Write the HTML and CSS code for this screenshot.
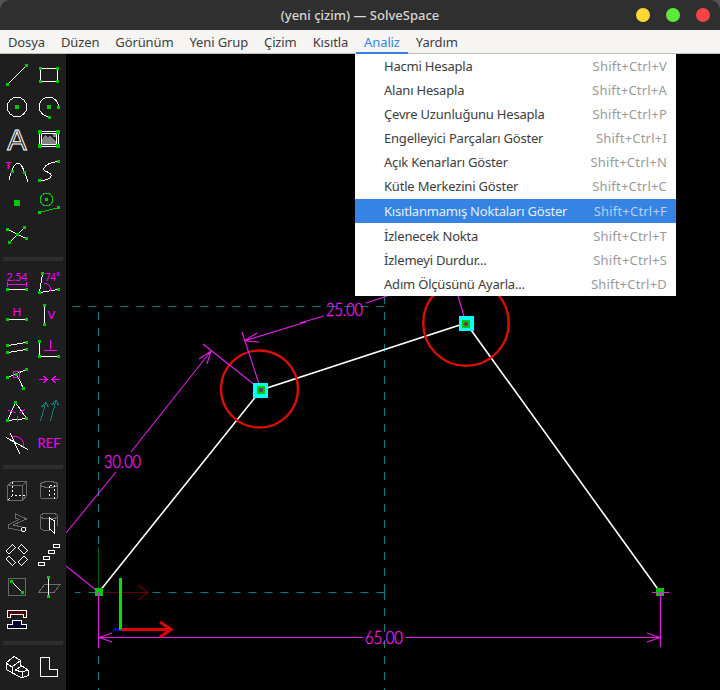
FILE: index.html

```html
<!DOCTYPE html>
<html lang="en">
<head>
    <meta charset="UTF-8">
    <meta name="viewport" content="width=device-width, initial-scale=1.0">
    <title>(yeni çizim) — SolveSpace</title>
    <link rel="stylesheet" href="styles.css">
</head>
<body>
<div class="window">
    <header class="titlebar">
        <span class="title">(yeni çizim) — SolveSpace</span>
        <div class="win-btns">
            <span class="dot yellow"></span>
            <span class="dot green"></span>
            <span class="dot red"></span>
        </div>
    </header>

    <nav class="menubar">
        <span class="menu-item">Dosya</span>
        <span class="menu-item">Düzen</span>
        <span class="menu-item">Görünüm</span>
        <span class="menu-item">Yeni Grup</span>
        <span class="menu-item">Çizim</span>
        <span class="menu-item">Kısıtla</span>
        <span class="menu-item active">Analiz</span>
        <span class="menu-item">Yardım</span>
    </nav>

    <div class="main">
        <aside class="toolbar">
            <div class="tool-group">
                <svg viewBox="0 0 32 32"><path class="w" d="M6.5 25.5 25.5 6.5"/><rect class="g" x="5" y="24" width="3" height="3"/><rect class="g" x="24" y="5" width="3" height="3"/></svg>
                <svg viewBox="0 0 32 32"><rect class="w" x="7.5" y="9.5" width="17" height="13"/><rect class="g" x="6" y="8" width="3" height="3"/><rect class="g" x="23" y="8" width="3" height="3"/><rect class="g" x="6" y="21" width="3" height="3"/><rect class="g" x="23" y="21" width="3" height="3"/></svg>

                <svg viewBox="0 0 32 32"><circle class="w" cx="16" cy="16" r="9.7"/><rect class="g" x="14" y="14" width="4" height="4"/></svg>
                <svg viewBox="0 0 32 32"><path class="w" d="M25.5 16A9.7 9.7 0 1 0 16 25.5"/><rect class="g" x="14" y="14" width="4" height="4"/><rect class="g" x="24" y="14.5" width="3" height="3"/><rect class="g" x="15" y="24.5" width="3" height="3"/></svg>

                <svg viewBox="0 0 32 32"><text class="icon-a" x="16" y="27" text-anchor="middle">A</text></svg>
                <svg viewBox="0 0 32 32"><rect class="w" x="6.5" y="8.5" width="19" height="15"/><rect class="w" x="8.5" y="10.5" width="15" height="11"/><path class="pic" d="M9 21V17L12 12 15 15 17 12 19 15 21 17 23 18V21Z"/><rect class="pic" x="20" y="11" width="3" height="3"/><rect class="g" x="5" y="7" width="4" height="4"/><rect class="g" x="23" y="7" width="4" height="4"/><rect class="g" x="5" y="21" width="4" height="4"/><rect class="g" x="23" y="21" width="4" height="4"/></svg>

                <svg viewBox="0 0 32 32"><text class="mt mt-t" x="4.500" y="13.500">T</text><path class="w" d="M8 25C10 17 13 8 17 8S24 18 27 27"/><rect class="g" x="10" y="14.500" width="3" height="3"/><rect class="g" x="22" y="15.500" width="3" height="3"/></svg>
                <svg viewBox="0 0 32 32"><path class="w" d="M6.500 25.500C12 25.500 19 24 18 20C17 16 9 17 11 13C13 9 20 7 25.500 6.500"/><rect class="g" x="5" y="24" width="3" height="3"/><rect class="g" x="24" y="5" width="3" height="3"/></svg>

                <svg viewBox="0 0 32 32"><rect class="g" x="13" y="13" width="6" height="6"/></svg>
                <svg viewBox="0 0 32 32"><circle class="gl" cx="13.500" cy="12.500" r="6.300"/><rect class="g" x="12" y="11" width="3" height="3"/><path class="gl" d="M6.500 25.500 25.500 20.500"/><rect class="g" x="5" y="24" width="3" height="3"/><rect class="g" x="24" y="19" width="3" height="3"/></svg>

                <svg viewBox="0 0 32 32"><path class="w" d="M6.500 10.500 25.500 19.500M23.500 8.500 8.500 23.500"/><rect class="g" x="5" y="9" width="3" height="3"/><rect class="g" x="24" y="18" width="3" height="3"/><rect class="g" x="22" y="7" width="3" height="3"/><rect class="g" x="7" y="22" width="3" height="3"/><rect class="g" x="14.500" y="13.500" width="3" height="3"/></svg>
            </div>

            <div class="tool-sep"></div>

            <div class="tool-group">
                <svg viewBox="0 0 32 32"><text class="mt mt-s" x="16" y="14" text-anchor="middle" textLength="21" lengthAdjust="spacingAndGlyphs">2.54</text><path class="m" d="M6.500 17.500H25.500M6.500 15V20M25.500 15V20"/><path class="w" d="M6.500 22.500H25.500"/><rect class="g" x="5" y="21" width="3" height="3"/><rect class="g" x="24" y="21" width="3" height="3"/></svg>
                <svg viewBox="0 0 32 32"><path class="w" d="M9.500 6.500 6.500 25.500 25.500 22.500"/><path class="m" d="M10.500 16C15 16 17.500 19 18 23.500"/><text class="mt mt-s" x="12" y="14" textLength="15" lengthAdjust="spacingAndGlyphs">74°</text><rect class="g" x="8" y="5" width="3" height="3"/><rect class="g" x="5" y="24" width="3" height="3"/><rect class="g" x="24" y="21" width="3" height="3"/></svg>

                <svg viewBox="0 0 32 32"><text class="mt mt-s" x="16" y="17" text-anchor="middle">H</text><path class="w" d="M6.500 20.500H25.500"/><rect class="g" x="5" y="19" width="3" height="3"/><rect class="g" x="24" y="19" width="3" height="3"/></svg>
                <svg viewBox="0 0 32 32"><path class="w" d="M11.500 6.500V25.500"/><text class="mt mt-s" x="18.500" y="20" text-anchor="middle">V</text><rect class="g" x="10" y="5" width="3" height="3"/><rect class="g" x="10" y="24" width="3" height="3"/></svg>

                <svg viewBox="0 0 32 32"><path class="w" d="M6.500 14.500 25.500 11.500M6.500 21.500 25.500 18.500"/><rect class="g" x="5" y="13" width="3" height="3"/><rect class="g" x="24" y="10" width="3" height="3"/><rect class="g" x="5" y="20" width="3" height="3"/><rect class="g" x="24" y="17" width="3" height="3"/></svg>
                <svg viewBox="0 0 32 32"><path class="w" d="M6.500 10.500V25.500H25.500"/><path class="m" d="M17.500 9V19.500M11 19.500H24"/><rect class="g" x="5" y="9" width="3" height="3"/><rect class="g" x="5" y="24" width="3" height="3"/><rect class="g" x="24" y="24" width="3" height="3"/></svg>

                <svg viewBox="0 0 32 32"><path class="w" d="M6.500 14.500 25.500 6.500M15.500 11 22.500 25.500"/><rect class="m" x="12.500" y="8.500" width="6" height="6"/><rect class="g" x="5" y="13" width="3" height="3"/><rect class="g" x="24" y="5" width="3" height="3"/><rect class="g" x="21" y="24" width="3" height="3"/><rect class="g" x="14" y="9.500" width="3" height="3"/></svg>
                <svg viewBox="0 0 32 32"><path class="m" d="M6 16.500H14M10.500 13 14 16.500 10.500 20M27 16.500H19M22.500 13 19 16.500 22.500 20"/></svg>

                <svg viewBox="0 0 32 32"><path class="w" d="M14.500 7.500 6.500 25.500 25.500 23.500Z"/><path class="m" d="M7.500 15.500 15 17.500M18.500 18 24 14.500M16 21V27"/><rect class="g" x="13" y="6" width="3" height="3"/><rect class="g" x="5" y="24" width="3" height="3"/><rect class="g" x="24" y="22" width="3" height="3"/></svg>
                <svg viewBox="0 0 32 32"><path class="t" d="M7.500 26 13 7M8.500 12 13 7 15.500 12.500M17.500 26 23 5M18.500 10 23 5 25.500 10.500"/></svg>

                <svg viewBox="0 0 32 32"><path class="w" d="M5 10.500 27 22.500M9 6 19 27"/><path class="m" d="M11 9C19 9 23 13 23 20"/></svg>
                <svg viewBox="0 0 32 32"><text class="mt mt-ref" x="16" y="21" text-anchor="middle" textLength="23" lengthAdjust="spacingAndGlyphs">REF</text></svg>
            </div>

            <div class="tool-sep"></div>

            <div class="tool-group">
                <svg viewBox="0 0 32 32"><path class="d" d="M6.500 10.500H21.500V25.500H6.500ZM6.500 10.500 11.500 6.500H25.500V20.500L21.500 25.500M21.500 10.500 25.500 6.500"/><path class="wd" d="M11.500 6.500V20.500H25.500M11.500 20.500 6.500 25.500"/></svg>
                <svg viewBox="0 0 32 32"><path class="d" d="M7.500 9.500V22.500C7.500 24.500 24.500 24.500 24.500 22.500V9.500"/><ellipse class="d" cx="16" cy="9.500" rx="8.500" ry="3"/><path class="wd" d="M16.500 10.500H21.500V24M16.500 10.500V23"/></svg>

                <svg viewBox="0 0 32 32"><path class="d" d="M14 6.500 25.500 12 12 18 25.500 21M14 6.500 14 11 18 12.500 7 18 7 21 22 24"/><circle class="w" cx="22.500" cy="22.500" r="2"/></svg>
                <svg viewBox="0 0 32 32"><path class="d" d="M7.500 9V21C7.500 23 13 24 17 24M24.500 9V19"/><ellipse class="d" cx="16" cy="9" rx="8.500" ry="3"/><path class="d" d="M16.500 11V22"/><path class="w" d="M16.500 11 21.500 14V26L16.500 22Z"/></svg>

                <svg viewBox="0 0 32 32"><rect class="w" x="5.500" y="8" width="9" height="4.500" transform="rotate(-45 10 10.300)"/><rect class="w" x="17.200" y="8" width="9" height="4.500" transform="rotate(45 21.700 10.300)"/><rect class="w" x="5.500" y="19.500" width="9" height="4.500" transform="rotate(45 10 21.700)"/><rect class="w" x="17.200" y="19.500" width="9" height="4.500" transform="rotate(-45 21.700 21.700)"/></svg>
                <svg viewBox="0 0 32 32"><rect class="w" x="5.500" y="23.500" width="6" height="3"/><rect class="w" x="10.500" y="17.500" width="6" height="3"/><rect class="w" x="15.500" y="11.500" width="6" height="3"/><rect class="w" x="20.500" y="5.500" width="6" height="3"/></svg>

                <svg viewBox="0 0 32 32"><rect class="d" x="7.500" y="7.500" width="17" height="17"/><path class="w" d="M10.500 10.500 21.500 21.500"/><rect class="g" x="9" y="9" width="3" height="3"/><rect class="g" x="20" y="20" width="3" height="3"/></svg>
                <svg viewBox="0 0 32 32"><path class="d" d="M5.500 21.500 11.500 13.500H27L21 21.500Z"/><path class="w" d="M15.500 6.500V25.500"/><rect class="g" x="14" y="5" width="3" height="3"/><rect class="g" x="14" y="24" width="3" height="3"/></svg>

                <svg viewBox="0 0 32 32"><path class="w top-half" d="M6.500 7.500H25.500V14.500H22.500V11.500H9.500V14.500H6.500Z"/><path class="w bottom-half" d="M6.500 25.500H25.500V21.500H20.500V17.500H11.500V21.500H6.500Z"/></svg>
                <svg viewBox="0 0 32 32"></svg>
            </div>

            <div class="tool-sep"></div>

            <div class="tool-group">
                <svg viewBox="0 0 32 32"><path class="w" d="M5 12 13 5.500 19.500 9.500V14L27 19V24.500L21 27 5 18.500ZM5 12 11 16V22M11 16 19.500 9.500M14 19 21 15M21 27V21L14 19M21 21 27 19"/></svg>
                <svg viewBox="0 0 32 32"><path class="w" d="M7.500 6.500H16.500V18.500H24.500V25.500H7.500Z"/></svg>
            </div>
        </aside>

        <div class="canvas">
            <svg class="sketch" viewBox="66 54 654 636">
                <path class="s-ref" d="M384.500 306.500H66M384.500 592.500H75M98.500 592V309M98.500 592V690M384.500 592V296M384.500 592V690"/>
                <path class="s-axis-dim-g" d="M98.500 547V592"/>
                <path class="s-axis-dim-r" d="M103 592.500H148M138 585 148 592.500 138 600"/>

                <path class="s-line" d="M99 592 261 390 466 323 660 592"/>

                <circle class="s-circle" cx="259.500" cy="389" r="38.500"/>
                <circle class="s-circle" cx="466" cy="323" r="42.800"/>

                <path class="s-dim" d="M261 390 203 344M131 452 211 351M199 359 211 351 207 364M116 472 66 533"/>
                <path class="s-dim" d="M98.500 592 66 566"/>
                <path class="s-dim" d="M261 390 242 332M244 341 257 333M244 341 259 342M244 341 306 322M300 323 324 316M366 303 387 296M466 323 458 296"/>
                <path class="s-dim" d="M98.500 592V648M660.500 592V647M99 637.500H363M406 637.500H660M99 637.500 112 633M99 637.500 112 642M660 637.500 647 633M660 637.500 647 642"/>

                <text class="s-label" x="104" y="468" textLength="37" lengthAdjust="spacingAndGlyphs">30.00</text>
                <text class="s-label" x="326" y="316" textLength="37" lengthAdjust="spacingAndGlyphs">25.00</text>
                <text class="s-label" x="365" y="644" textLength="38" lengthAdjust="spacingAndGlyphs">65.00</text>

                <rect class="s-cyan" x="253" y="383" width="15" height="15"/>
                <rect class="s-green" x="257" y="386" width="8" height="8"/>
                <circle class="s-dot" cx="261" cy="390" r="2"/>
                <rect class="s-cyan" x="459" y="316" width="15" height="15"/>
                <rect class="s-green" x="462" y="320" width="8" height="8"/>
                <circle class="s-dot" cx="466" cy="324" r="2"/>
                <rect class="s-green" x="95" y="588" width="8" height="8"/>
                <rect class="s-green" x="656" y="588" width="8" height="8"/>
                <path class="s-dim" d="M98.500 592V596M660.500 592V596M652 592.500H669"/>

                <path class="s-blue" d="M113 629.500H121"/>
                <path class="s-green-axis" d="M120.500 578V630"/>
                <path class="s-red-axis" d="M121 629.500H171M160 622 171 629.500 160 637"/>
            </svg>

            <div class="dropdown">
                <div class="dd-row"><span>Hacmi Hesapla</span><span class="dd-key">Shift+Ctrl+V</span></div>
                <div class="dd-row"><span>Alanı Hesapla</span><span class="dd-key">Shift+Ctrl+A</span></div>
                <div class="dd-row"><span>Çevre Uzunluğunu Hesapla</span><span class="dd-key">Shift+Ctrl+P</span></div>
                <div class="dd-row"><span>Engelleyici Parçaları Göster</span><span class="dd-key">Shift+Ctrl+I</span></div>
                <div class="dd-row"><span>Açık Kenarları Göster</span><span class="dd-key">Shift+Ctrl+N</span></div>
                <div class="dd-row"><span>Kütle Merkezini Göster</span><span class="dd-key">Shift+Ctrl+C</span></div>
                <div class="dd-row selected"><span>Kısıtlanmamış Noktaları Göster</span><span class="dd-key">Shift+Ctrl+F</span></div>
                <div class="dd-row"><span>İzlenecek Nokta</span><span class="dd-key">Shift+Ctrl+T</span></div>
                <div class="dd-row"><span>İzlemeyi Durdur...</span><span class="dd-key">Shift+Ctrl+S</span></div>
                <div class="dd-row"><span>Adım Ölçüsünü Ayarla...</span><span class="dd-key">Shift+Ctrl+D</span></div>
            </div>
        </div>
    </div>
</div>
</body>
</html>
```

FILE: styles.css

```css
* {
    box-sizing: border-box;
}
body {
    margin: 0;
    background: #555;
    font-family: "Noto Sans", sans-serif;
    font-size: 13px;
}
.window {
    width: 720px;
    height: 690px;
    display: flex;
    flex-direction: column;
    overflow: hidden;
    border-radius: 10px 10px 0 0;
}
.titlebar {
    height: 30px;
    background: #2f2f2f;
    display: flex;
    align-items: center;
    justify-content: center;
    position: relative;
}
.title {
    color: #d6d6d6;
    font-weight: 500;
}
.win-btns {
    position: absolute;
    right: 10px;
    top: 8px;
    display: flex;
    gap: 16px;
}
.dot {
    width: 14px;
    height: 14px;
    border-radius: 50%;
}
.yellow {
    background: #fdd835;
}
.green {
    background: #5fe83c;
}
.red {
    background: #f44444;
}
.menubar {
    height: 24px;
    background: #f6f5f4;
    border-bottom: 1px solid #c0bfbc;
    display: flex;
    color: #3d3d3d;
    letter-spacing: -0.12px;
}
.menu-item {
    padding: 0 8px;
    line-height: 24px;
    height: 24px;
}
.menu-item.active {
    color: #3584e4;
    border-bottom: 2px solid #3584e4;
}
.main {
    flex: 1;
    display: flex;
    min-height: 0;
}
.toolbar {
    width: 66px;
    background: #1e1e1e;
    padding: 5px 0 0 1px;
    flex-shrink: 0;
}
.tool-group {
    display: grid;
    grid-template-columns: 32px 32px;
    grid-auto-rows: 32px;
}
.tool-group svg {
    width: 32px;
    height: 32px;
    display: block;
    shape-rendering: crispEdges;
}
.tool-sep {
    height: 4px;
    margin: 6px 3px 6px 2px;
    background: #2e2e2e;
}
.w {
    fill: none;
    stroke: #fff;
    stroke-width: 1;
}
.g {
    fill: #00c800;
}
.gl {
    fill: none;
    stroke: #00c800;
    stroke-width: 1;
}
.m {
    fill: none;
    stroke: #f0f;
    stroke-width: 1;
}
.t {
    fill: none;
    stroke: #0a8080;
    stroke-width: 1;
}
.d {
    fill: none;
    stroke: #6a6a6a;
    stroke-width: 1;
}
.wd {
    fill: none;
    stroke: #fff;
    stroke-width: 1;
    stroke-dasharray: 2 2;
}
.pic {
    fill: #808080;
}
.top-half {
    fill: #4a0808;
}
.bottom-half {
    fill: #00002e;
}
.mt {
    fill: #f0f;
    font-family: Lato, "Liberation Sans", sans-serif;
}
.mt-s {
    font-size: 11.5px;
}
.mt-t {
    font-size: 9px;
    font-weight: bold;
}
.mt-ref {
    font-size: 13px;
}
.icon-a {
    font-family: "Liberation Sans", sans-serif;
    font-size: 29px;
    fill: none;
    stroke: #fff;
    stroke-width: 1;
}
.canvas {
    flex: 1;
    background: #000;
    position: relative;
}
.sketch {
    position: absolute;
    left: 0;
    top: 0;
    width: 654px;
    height: 636px;
    display: block;
}
.s-ref {
    fill: none;
    stroke: #008080;
    stroke-width: 1;
    stroke-dasharray: 8 8;
}
.s-axis-dim-g {
    fill: none;
    stroke: #006400;
}
.s-axis-dim-r {
    fill: none;
    stroke: #640000;
    stroke-width: 1.2;
}
.s-line {
    fill: none;
    stroke: #fff;
    stroke-width: 1.6;
}
.s-circle {
    fill: none;
    stroke: #dc0f00;
    stroke-width: 2.4;
}
.s-dim {
    fill: none;
    stroke: #e81ee8;
    stroke-width: 1.1;
}
.s-label {
    fill: #f01ef0;
    stroke: #f01ef0;
    stroke-width: 0.35;
    font-family: Lato, "Liberation Sans", sans-serif;
    font-weight: 300;
    font-size: 18px;
}
.s-cyan {
    fill: #00ffff;
}
.s-green {
    fill: #00c800;
}
.s-dot {
    fill: #8a1a8a;
}
.s-blue {
    fill: none;
    stroke: #0000c0;
    stroke-width: 3;
}
.s-green-axis {
    fill: none;
    stroke: #00e000;
    stroke-width: 3;
}
.s-red-axis {
    fill: none;
    stroke: #e00000;
    stroke-width: 3;
}
.dropdown {
    position: absolute;
    left: 289px;
    top: 0;
    width: 321px;
    height: 242px;
    background: #fff;
    color: #3d3d3d;
}
.dd-row {
    height: 24px;
    padding: 0 9px 0 29px;
    display: flex;
    justify-content: space-between;
    align-items: center;
    letter-spacing: -0.2px;
}
.dd-key {
    color: #9a9a9a;
    letter-spacing: 0.2px;
}
.selected {
    margin: 1px 0;
    background: #3584e4;
    color: #e4eefc;
}
.selected .dd-key {
    color: #b4cff3;
}
```
